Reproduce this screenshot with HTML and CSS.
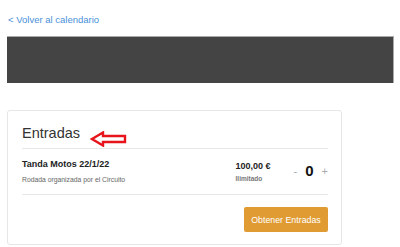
FILE: index.html
```html
<!doctype html>
<html>

<head>
  <meta charset="utf-8">
  <title>Entradas</title>
  <meta name="viewport" content="width=device-width, initial-scale=1">
  <link rel="stylesheet" href="styles.css">
</head>

<body>
  <div class="page">
    <a href="#" class="back">&lt; Volver al calendario</a>

    <div class="banner"></div>

    <div class="tickets">
      <div class="tickets_head">
        <h2>Entradas</h2>
        <svg class="arrow" width="37" height="16" viewBox="0 0 37 16">
          <path d="M2 8 L13 1.5 L13 5 L35 5 L35 11 L13 11 L13 14.5 Z" fill="none" stroke="#e8141c" stroke-width="2.4" stroke-linejoin="miter"/>
        </svg>
      </div>

      <div class="ticket">
        <div class="ticket_info">
          <strong class="ticket_name">Tanda Motos 22/1/22</strong>
          <span class="ticket_desc">Rodada organizada por el Circuito</span>
        </div>
        <div class="ticket_price">
          <strong>100,00 €</strong>
          <span>Ilimitado</span>
        </div>
        <div class="ticket_qty">
          <span class="qty_btn">-</span>
          <span class="qty_num">0</span>
          <span class="qty_btn">+</span>
        </div>
      </div>

      <div class="tickets_foot">
        <a href="#" class="buy_button">Obtener Entradas</a>
      </div>
    </div>
  </div>
</body>

</html>
```

FILE: styles.css
```css
* {
  margin: 0;
  box-sizing: border-box;
}

html {
  font-family: "Liberation Sans", Arial, sans-serif;
  background: #fff;
  color: #333;
}

body {
  margin: 0;
}

.page {
  padding: 13px 6px 0 7px;
  display: flex;
  flex-direction: column;
  align-items: flex-start;
}

.back {
  font-size: 9.5px;
  line-height: 14px;
  color: #4a90d9;
  text-decoration: none;
  margin-left: 1px;
}

.banner {
  align-self: stretch;
  height: 47px;
  margin-top: 9px;
  background: #444;
  border-top: 1px solid #aaa;
  border-right: 1px solid #aaa;
}

.tickets {
  margin-top: 27px;
  width: 335px;
  height: 135px;
  border: 1px solid #e6e6e6;
  border-radius: 3px;
  padding: 0 13px 0 14px;
}

.tickets_head {
  display: flex;
  align-items: flex-end;
  padding-top: 14px;
  padding-bottom: 6px;
  border-bottom: 1px solid #e8e8e8;
}

.tickets_head h2 {
  font-size: 14.5px;
  font-weight: normal;
  line-height: 17px;
  color: #333;
}

.arrow {
  margin-left: 10px;
  margin-bottom: -5px;
}

.ticket {
  display: flex;
  align-items: center;
  padding: 9px 0 11px;
  border-bottom: 1px solid #e8e8e8;
}

.ticket_info {
  flex: 1;
  display: flex;
  flex-direction: column;
}

.ticket_name {
  font-size: 9px;
  line-height: 12px;
  color: #222;
}

.ticket_desc {
  margin-top: 6px;
  font-size: 6.8px;
  color: #666;
}

.ticket_price {
  width: 58px;
  display: flex;
  flex-direction: column;
}

.ticket_price strong {
  font-size: 9px;
  line-height: 12px;
  color: #222;
}

.ticket_price span {
  margin-top: 3px;
  font-size: 6.5px;
  font-weight: bold;
  color: #777;
}

.ticket_qty {
  display: flex;
  align-items: center;
  gap: 8px;
  padding-right: 0;
}

.qty_btn {
  font-size: 11px;
  color: #aaa;
}

.qty_num {
  font-size: 15px;
  font-weight: bold;
  color: #111;
}

.tickets_foot {
  display: flex;
  justify-content: flex-end;
  padding-top: 12px;
}

.buy_button {
  width: 84px;
  height: 25px;
  display: flex;
  align-items: center;
  justify-content: center;
  background-color: #e09b33;
  color: #fff;
  font-size: 8.8px;
  text-decoration: none;
  border-radius: 2px;
}
```
